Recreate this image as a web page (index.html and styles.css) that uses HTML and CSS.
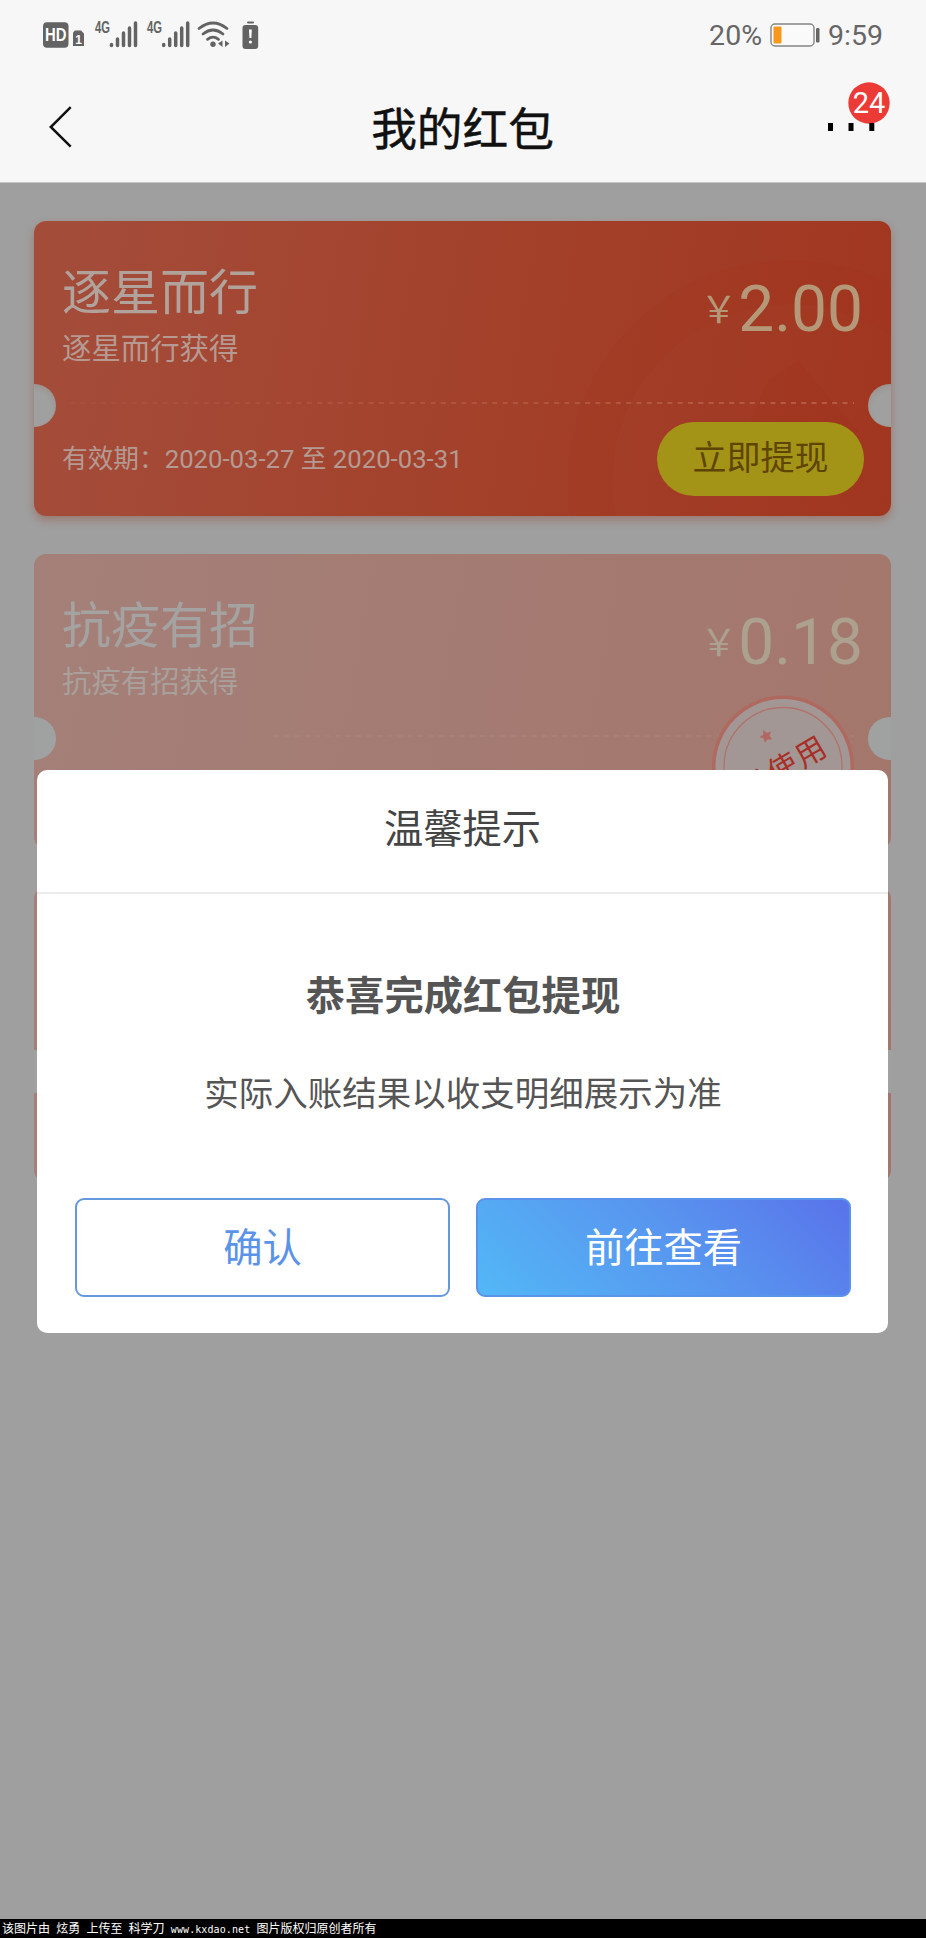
FILE: index.html
```html
<!DOCTYPE html>
<html lang="zh-CN">
<head>
<meta charset="utf-8">
<title>我的红包</title>
<link rel="stylesheet" href="styles.css">
</head>
<body>
<div class="screen">
  <div class="status">
    <svg class="status-icons" width="300" height="60" viewBox="0 0 300 60" fill="#636363">
      <rect x="43" y="22.300" width="25.500" height="25.500" rx="4"/>
      <text class="hd" x="45" y="41" textLength="21.500" lengthAdjust="spacingAndGlyphs">HD</text>
      <path d="M75 30.500h6l3 3V46H73V32.500z"/>
      <text class="sim" x="75.200" y="43.500">1</text>
      <text class="net" x="95" y="33" textLength="15" lengthAdjust="spacingAndGlyphs">4G</text>
      <text class="net" x="147" y="33" textLength="15" lengthAdjust="spacingAndGlyphs">4G</text>
      <g stroke="#636363" stroke-width="3.500" stroke-linecap="round">
        <path d="M111.500 44.500v1M117.500 39v6.500M123.500 33v12.500M129.500 28v17.500M135.500 23v22.500"/>
        <path d="M163.700 44.500v1M169.700 39v6.500M175.700 33v12.500M181.700 28v17.500M187.700 23v22.500"/>
      </g>
      <g fill="none" stroke="#636363" stroke-width="2.800" stroke-linecap="round">
        <path d="M199 28.500Q213 17.500 227 28.500M203 34Q213 26 223 34M207.500 39.300Q213 35 218.500 39.300"/>
      </g>
      <circle cx="213" cy="44.200" r="2.700"/>
      <path d="M222.500 40.500v6.500l-4.500-3.500zM225 40.500v6.500l4.500-3.500z"/>
      <rect x="247" y="21.500" width="7" height="2" rx="1"/>
      <rect x="242.500" y="25" width="15.700" height="24" rx="3"/>
      <path d="M249 29.500h2.800l-.4 8.500h-2z" fill="#fff"/><circle cx="250.400" cy="42" r="1.600" fill="#fff"/>
    </svg>
    <div class="status-right">
      <span>20%</span>
      <svg width="50" height="24" viewBox="0 0 50 24">
        <rect x="1" y="1" width="43" height="22" rx="4" fill="#fafafa" stroke="#858585" stroke-width="1.400"/>
        <rect x="3.500" y="3.500" width="8" height="17" rx="1" fill="#f7981d"/>
        <rect x="46" y="5" width="3.500" height="14.500" rx="1.300" fill="#666"/>
      </svg>
      <span>9:59</span>
    </div>
  </div>
  <div class="nav">
    <svg class="back" width="24" height="44" viewBox="0 0 24 44"><path d="M21.700 2.200L1.800 22l19.900 19.700" fill="none" stroke="#111" stroke-width="2.500"/></svg>
    <h1>我的红包</h1>
    <svg class="more" width="64" height="52" viewBox="0 0 64 52">
      <circle cx="43" cy="21" r="20.700" fill="#ec3b36"/>
      <text class="badge-text" x="43" y="31" text-anchor="middle">24</text>
      <path d="M2 41h5v8H2zM22.500 41h5v8h-5zM43.300 41h5v8h-5z"/>
    </svg>
  </div>

  <div class="list">
    <div class="card">
      <svg class="mark" width="857" height="295" viewBox="0 0 857 295">
        <defs><linearGradient id="fade" gradientUnits="userSpaceOnUse" x1="36" y1="0" x2="820" y2="0"><stop offset="0" stop-color="#d88c78" stop-opacity=".06"/><stop offset="1" stop-color="#d88c78" stop-opacity=".42"/></linearGradient></defs>
        <circle cx="756" cy="261" r="200" fill="none" stroke="#a02c16" stroke-opacity=".13" stroke-width="44"/>
        <path d="M734 160l30-20 60 70-30 36-24-30-26 34-34-34z" fill="#a02c16" fill-opacity=".1"/>
        <path d="M36 182H820" stroke="url(#fade)" stroke-width="2" stroke-dasharray="5 5.300"/>
      </svg>
      <div class="row">
        <div><h2>逐星而行</h2><p class="from">逐星而行获得</p></div>
        <div class="amount"><span class="yen">￥</span>2.00</div>
      </div>
      <div class="foot"><span class="date">有效期：2020-03-27 至 2020-03-31</span><span class="pill">立即提现</span></div>
    </div>
    <div class="card used">
      <svg class="mark" width="857" height="295" viewBox="0 0 857 295">
        <path d="M240 182H820" stroke="#b08f88" stroke-opacity=".28" stroke-width="2" stroke-dasharray="5 5.300"/>
        <g transform="translate(749 212.500)">
          <circle r="71" fill="#b0695f"/>
          <circle r="67.500" fill="#a39795"/>
          <circle r="59" fill="none" stroke="#b0726a" stroke-width="1.300"/>
          <path transform="translate(-17 -30.500) rotate(-25)" d="M0-6.500l1.900 4.200 4.600.5-3.400 3.100 1 4.600-4.100-2.400-4.100 2.400 1-4.600-3.400-3.100 4.600-.5z" fill="#b3665f"/>
          <text class="stamp" transform="rotate(-30.500)" text-anchor="middle" x="0" y="12">已使用</text>
        </g>
      </svg>
      <div class="row">
        <div><h2>抗疫有招</h2><p class="from">抗疫有招获得</p></div>
        <div class="amount"><span class="yen">￥</span>0.18</div>
      </div>
    </div>
    <div class="card used"></div>
  </div>

  <div class="dialog">
    <div class="dialog-title">温馨提示</div>
    <div class="dialog-body">
      <h3>恭喜完成红包提现</h3>
      <p>实际入账结果以收支明细展示为准</p>
      <div class="actions"><span class="btn">确认</span><span class="btn primary">前往查看</span></div>
    </div>
  </div>

  <div class="credit">该图片由 炫勇 上传至 科学刀 <span class="url">www.kxdao.net</span> 图片版权归原创者所有</div>
</div>
</body>
</html>
```
FILE: styles.css
```css
* { box-sizing: border-box; margin: 0; padding: 0; }
body { font-family: Roboto, "Noto Sans CJK SC", sans-serif; }
.screen { position: relative; width: 926px; height: 1938px; display: flex; flex-direction: column; background: #9f9f9f; overflow: hidden; }

.status { height: 70px; background: #f7f7f7; display: flex; justify-content: space-between; }
.status-icons { display: block; }
.hd { font: bold 19px "Liberation Sans", sans-serif; fill: #fff; }
.sim { font: bold 12px "Liberation Sans", sans-serif; fill: #fff; }
.net { font: bold 16.500px "Liberation Sans", sans-serif; }
.status-right { display: flex; align-items: center; height: 70px; gap: 8px; padding-right: 43px; font-size: 28.500px; color: #666; }
.status-right svg { display: block; }

.nav { height: 113px; background: #f7f7f7; border-bottom: 1px solid #c6c6c6; display: flex; justify-content: space-between; padding: 0 36px 0 49px; }
.back { margin-top: 35px; }
.nav h1 { font-family: "Noto Sans CJK SC", sans-serif; font-size: 45.700px; font-weight: 400; line-height: 60px; margin-top: 26px; margin-left: 26px; color: #111; -webkit-text-stroke: .5px #111; }
.more { margin-top: 12px; }
.badge-text { font: 29px Roboto, sans-serif; fill: #fff; }

.list { flex: 1; padding: 38px 35px 0 34px; display: flex; flex-direction: column; gap: 38px; }
.card { position: relative; height: 295px; border-radius: 12px; overflow: hidden; background: linear-gradient(100deg, #a44c3a 5%, #a3422c 48%, #a13620 100%); box-shadow: 0 4px 8px rgba(150, 60, 40, .38); padding: 41px 27px 0 28px; }
.card::before, .card::after { content: ""; position: absolute; top: 163px; width: 43px; height: 43px; border-radius: 50%; background: #9fa09f; box-shadow: inset 0 3px 5px rgba(150, 70, 50, .16); }
.card::before { left: -21px; }
.card::after { right: -20px; }
.mark { position: absolute; left: 0; top: 0; }
.row { position: relative; display: flex; justify-content: space-between; }
.row h2 { font-size: 49px; font-weight: 400; line-height: 64px; color: #b1a39c; }
.from { font-size: 29.400px; line-height: 40px; margin-top: 3px; color: #b69a92; }
.amount { font-size: 64px; line-height: 76px; margin-top: 10px; margin-right: 1px; color: #b59877; display: flex; }
.yen { font: 400 37px/70px "Noto Sans CJK SC", sans-serif; width: 38px; }
.foot { position: relative; height: 75px; margin-top: 53px; display: flex; align-items: center; justify-content: space-between; }
.date { font-size: 25.700px; line-height: 36px; margin-top: -1px; color: #b49a92; }
.pill { width: 207px; height: 74px; margin-top: -2px; border-radius: 37px; background: #a39317; color: #5f4503; font-size: 34px; line-height: 73px; text-align: center; }

.used { background: linear-gradient(100deg, #a48079, #a47b72 50%, #a4776c); box-shadow: none; }
.used::before, .used::after { box-shadow: none; background: #a0a2a1; }
.used h2 { color: #a5a3a1; }
.used .from { color: #a9a09c; }
.used .amount { color: #aca08e; }
.stamp { font: 30px "Noto Sans CJK SC", sans-serif; letter-spacing: 2px; fill: #a72f27; }

.dialog { position: absolute; left: 37px; top: 770px; width: 851px; height: 563px; background: #fff; border-radius: 10px; }
.dialog-title { height: 124px; border-bottom: 2px solid #ececec; font-size: 39.300px; line-height: 120px; text-align: center; color: #444; }
.dialog-body { padding: 73px 37px 0 38px; text-align: center; color: #555; }
.dialog-body h3 { font-size: 39.300px; font-weight: 700; line-height: 60px; }
.dialog-body p { font-size: 34.500px; line-height: 50px; margin-top: 42px; }
.actions { display: flex; gap: 26px; margin-top: 79px; }
.btn { flex: 1; height: 99px; border: 2px solid #6499e0; border-radius: 9px; font-size: 39.300px; line-height: 98px; color: #5b93e8; }
.primary { color: #fff; border-color: #5b92ea; background: linear-gradient(45deg, #52b8f6, #5895ef 55%, #5972ea) border-box; }

.credit { height: 19px; background: #000; color: #fff; font-family: "Noto Sans CJK SC", sans-serif; font-size: 12px; line-height: 18px; padding-left: 2px; word-spacing: 3.500px; white-space: nowrap; }
.url { font: 10px/12px "DejaVu Sans Mono", monospace; letter-spacing: .1px; }
```
